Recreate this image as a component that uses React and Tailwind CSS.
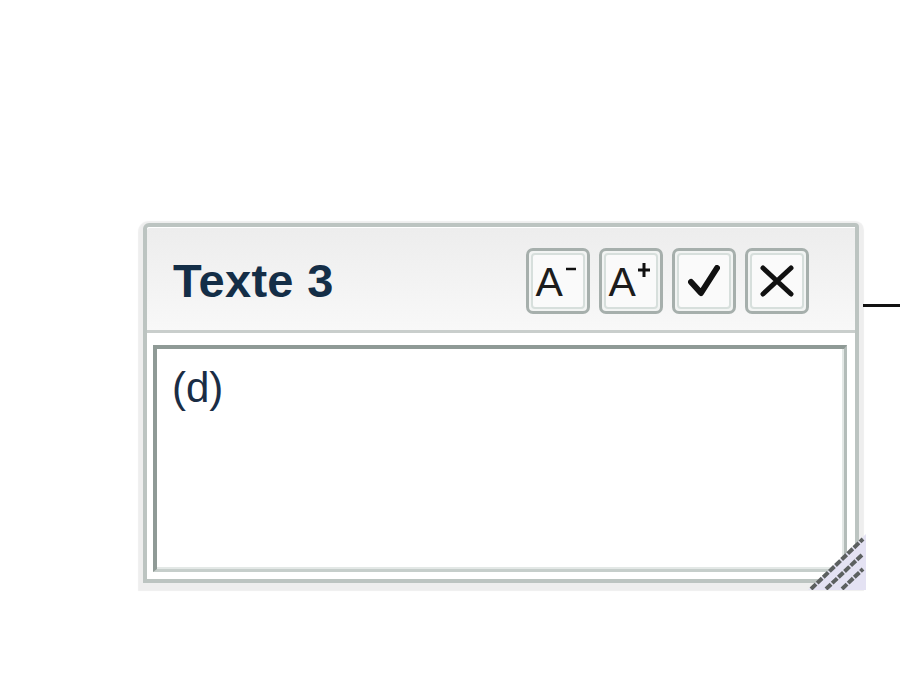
import React from "react";

const font = { fontFamily: '"Liberation Sans", Arial, sans-serif' };

const ToolButton = ({ children, title }) => (
  <button
    title={title}
    className="w-[64px] h-[66px] rounded-[7px] border-[3px] border-[#a6afac] bg-[#f2f4f3] p-[2px]"
  >
    <div className="w-full h-full rounded-[4px] border-2 border-[#d7dfdc] bg-[#fafafa] flex items-center justify-center">
      {children}
    </div>
  </button>
);

const FontIcon = ({ plus }) => (
  <div className="flex items-start text-[#1c1c1c] leading-none -ml-[3px]" style={font}>
    <span className="text-[41px] font-normal mt-[2px]">A</span>
    <svg width="14" height="20" viewBox="0 0 14 20" className="ml-[1px]">
      {plus ? (
        <path d="M1 10 H13 M7 3 V17" stroke="#111" strokeWidth="3" />
      ) : (
        <path d="M2 9 H12" stroke="#111" strokeWidth="2.5" />
      )}
    </svg>
  </div>
);

const CheckIcon = () => (
  <svg width="32" height="32" viewBox="0 0 32 32">
    <path d="M3 17 L13 28 L29 3" fill="none" stroke="#111" strokeWidth="6" strokeLinecap="round" strokeLinejoin="round" />
  </svg>
);

const CloseIcon = () => (
  <svg width="34" height="32" viewBox="0 0 34 32">
    <path d="M3 3 L31 29 M31 3 L3 29" fill="none" stroke="#111" strokeWidth="5" strokeLinecap="round" />
  </svg>
);

const ResizeGrip = () => (
  <svg className="absolute right-[-11px] bottom-[-11px]" width="58" height="56" viewBox="0 0 58 56">
    <polygon points="58,0 58,56 0,56" fill="#e4e2f3" />
    <g stroke="#5c6060" strokeWidth="4" strokeDasharray="7 1.5">
      <path d="M3 55 L55 5" />
      <path d="M18 55 L55 20" />
      <path d="M34 55 L55 35" />
    </g>
  </svg>
);

export default function App() {
  return (
    <div className="w-[900px] h-[700px] bg-white flex items-start pt-[223px] pl-[143px]">
      {/* Note panel */}
      <div className="relative w-[720px] h-[360px] flex flex-col border-4 border-[#bcc4c1] rounded-tl-[6px] rounded-tr-[4px] bg-white shadow-[0_3px_1px_5px_rgba(0,0,0,0.065)]">
        {/* Header */}
        <div className="h-[106px] flex items-center justify-between pl-[26px] pr-[46px] border-b-[3px] border-[#c9cecc] border-t border-t-white bg-linear-to-b from-[#ededed] to-[#f8f8f8] rounded-tl-[3px]">
          <h1 className="text-[47px] font-bold text-[#142e47] leading-none mt-[2px] tracking-[0.3px]" style={font}>
            Texte 3
          </h1>
          <div className="flex items-center gap-[9px] mt-[4px]">
            <ToolButton title="Réduire">
              <FontIcon />
            </ToolButton>
            <ToolButton title="Agrandir">
              <FontIcon plus />
            </ToolButton>
            <ToolButton title="Valider">
              <CheckIcon />
            </ToolButton>
            <ToolButton title="Fermer">
              <CloseIcon />
            </ToolButton>
          </div>
        </div>

        {/* Body */}
        <div className="flex-1 pt-[12px] pl-[6px] pr-[8px] pb-[7px]">
          <div className="w-full h-full border-t-4 border-l-4 border-[#8f9a96] border-r-[3px] border-b-[3px] border-r-[#b3bcb9] border-b-[#c6cecb] bg-white shadow-[inset_-2px_-2px_0_#e3e8e6]">
            <p className="pl-[15px] pt-[15px] text-[42px] text-[#1a2d45] leading-[48px]" style={font}>
              (d)
            </p>
          </div>
        </div>

        <ResizeGrip />
      </div>

      {/* Connector line */}
      <div className="w-[37px] h-[3px] bg-[#111] mt-[81px] ml-[4px]" />
    </div>
  );
}
